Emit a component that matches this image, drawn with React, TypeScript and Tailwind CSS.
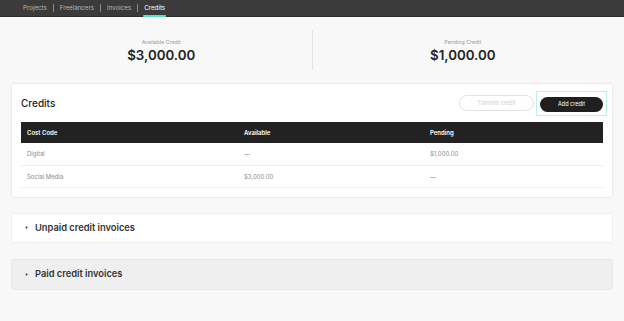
import { useState } from 'react'

const tabs = ['Projects', 'Freelancers', 'Invoices', 'Credits']

const rows = [
  { code: 'Digital', available: '—', pending: '$1,000.00' },
  { code: 'Social Media', available: '$3,000.00', pending: '—' },
]

function Caret() {
  return (
    <svg width="4" height="5" viewBox="0 0 4 5" className="mr-[6px]">
      <path d="M0.8 1 L3 2.5 L0.8 4 Z" fill="#444" />
    </svg>
  )
}

export default function App() {
  const [active] = useState('Credits')

  return (
    <div className="min-h-[321px] bg-[#f8f8f8] font-['Inter',sans-serif] text-[#222]">
      {/* Top nav */}
      <nav className="h-[17px] bg-[#3b3b3b] border-b border-[#2c2c2c] pl-[23px] flex items-stretch">
        {tabs.map((tab, i) => (
          <div key={tab} className="flex items-center">
            {i > 0 && <span className="mx-[6px] h-[8px] w-px bg-[#8a8a8a]" />}
            <span
              className={
                tab === active
                  ? 'relative h-full flex items-center text-[6.2px] text-white'
                  : 'h-full flex items-center text-[6.2px] text-[#b8b8b8]'
              }
            >
              {tab}
              {tab === active && (
                <span className="absolute left-[-1px] right-[-1px] bottom-[-1px] h-[2px] rounded-full bg-[#5ee0c8]" />
              )}
            </span>
          </div>
        ))}
      </nav>

      {/* Summary */}
      <div className="flex px-[11px] pt-[13px] pb-[13px]">
        <div className="flex-1 flex flex-col items-center justify-center h-[40px] border-r border-[#e4e4e4]">
          <span className="text-[5.3px] text-[#9a9a9a] leading-[8px] mb-[1px]">Available Credit</span>
          <span className="text-[13.3px] font-semibold leading-[16px]">$3,000.00</span>
        </div>
        <div className="flex-1 flex flex-col items-center justify-center h-[40px]">
          <span className="text-[5.3px] text-[#9a9a9a] leading-[8px] mb-[1px]">Pending Credit</span>
          <span className="text-[13.3px] font-semibold leading-[16px]">$1,000.00</span>
        </div>
      </div>

      <div className="px-[11px] flex flex-col">
        {/* Credits card */}
        <div className="bg-white border border-[#ececec] rounded-[3px] px-[9px] pt-[6px] pb-[9px]">
          <div className="flex items-center justify-between h-[26px] mb-[6px]">
            <h2 className="text-[10px] font-medium">Credits</h2>
            <div className="flex items-center mr-[-4px]">
              <button className="w-[75px] h-[16px] rounded-full border border-[#e2e2e2] text-[5.5px] text-[#d0d0d0] mr-[2px]">
                Transfer credit
              </button>
              <div className="flex px-[3px] pt-[5px] pb-[3px] border border-[#bdf0e6]">
                <button className="w-[63px] h-[15px] rounded-full bg-[#1f1f1f] text-[5.5px] text-white">
                  Add credit
                </button>
              </div>
            </div>
          </div>

          <table className="w-full text-left border-collapse">
            <thead>
              <tr className="bg-[#222] text-white h-[21px]">
                <th className="pl-[6px] w-[223px] text-[6px] font-semibold">Cost Code</th>
                <th className="w-[186px] text-[6px] font-semibold">Available</th>
                <th className="text-[6px] font-semibold">Pending</th>
              </tr>
            </thead>
            <tbody>
              {rows.map((r) => (
                <tr key={r.code} className="h-[22px] border-b border-[#ededed] text-[6px] text-[#8a8a8a]">
                  <td className="pl-[6px]">{r.code}</td>
                  <td>{r.available}</td>
                  <td>{r.pending}</td>
                </tr>
              ))}
            </tbody>
          </table>
        </div>

        {/* Unpaid */}
        <div className="mt-[15px] h-[30px] bg-white border border-[#efefef] rounded-[3px] flex items-center pl-[13px]">
          <Caret />
          <span className="text-[9.3px] font-semibold text-[#333]">Unpaid credit invoices</span>
        </div>

        {/* Paid */}
        <div className="mt-[16px] h-[31px] bg-[#efefef] border border-[#e8e8e8] rounded-[3px] flex items-center pl-[13px]">
          <Caret />
          <span className="text-[9.3px] font-semibold text-[#333]">Paid credit invoices</span>
        </div>
      </div>
    </div>
  )
}
